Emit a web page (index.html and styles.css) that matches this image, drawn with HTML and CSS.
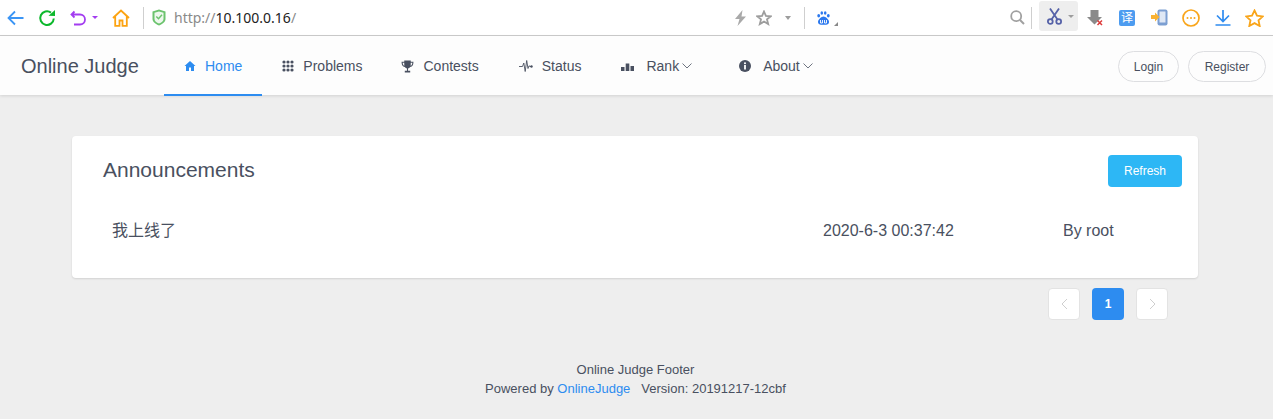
FILE: index.html
```html
<!DOCTYPE html>
<html lang="en">
<head>
<meta charset="utf-8">
<title>Online Judge</title>
<link rel="stylesheet" href="styles.css">
</head>
<body>
<div class="toolbar">
  <svg class="ti ti-back" viewBox="0 0 17 16"><path d="M8 1.500 1.500 8 8 14.500M1.500 8H16.500" fill="none" stroke="#3b95f5" stroke-width="1.800"/></svg>
  <svg class="ti ti-reload" viewBox="0 0 18 18"><path d="M15.800 9.500A6.800 6.800 0 1 1 13 3.600" fill="none" stroke="#0cb82c" stroke-width="2"/><path d="M10.500 6.700 17 7V1z" fill="#0cb82c"/></svg>
  <svg class="ti ti-undo" viewBox="0 0 16 16"><path d="M4.500 1.500 1.500 4.500 4.500 7.500M1.500 4.500H10a4.500 4.500 0 0 1 0 10H4" fill="none" stroke="#a33df0" stroke-width="1.800"/></svg>
  <span class="caret caret-purple"></span>
  <svg class="ti ti-home" viewBox="0 0 18 18"><path d="M1 9 9 1.500 17 9M3.200 7.500V16.800H7.500V11.500H10.500V16.800H14.800V7.500" fill="none" stroke="#fca311" stroke-width="1.800"/></svg>
  <span class="sep sep-left"></span>
  <svg class="ti ti-shield" viewBox="0 0 14 17"><path d="M.5 2.500 7 .5l6.500 2V10c0 3-3 5-6.500 6.500C3.500 15 .5 13 .5 10z" fill="#6cc36e"/><path d="M2.500 3.800 7 2.500l4.500 1.300V10c0 2-2 3.500-4.500 4.500C4.500 13.500 2.500 12 2.500 10z" fill="#eef8ee"/><path d="M4.300 7.500 6.500 9.700 10 5.800" fill="none" stroke="#6cc36e" stroke-width="1.500"/></svg>
  <span class="url"><span class="url-dim">http://</span>10.100.0.16<span class="url-dim">/</span></span>
  <svg class="ti ti-bolt" viewBox="0 0 13 16"><path d="M8.500 0 1 9H5.500L3.500 16 12 6.500H7.500z" fill="#a9a9a9"/></svg>
  <svg class="ti ti-star" viewBox="0 0 16 16"><path d="M8 1.500 9.900 5.900 14.700 6.300 11 9.400 12.200 14.100 8 11.600 3.800 14.100 5 9.400 1.300 6.300 6.100 5.900z" fill="none" stroke="#9d9d9d" stroke-width="1.800"/></svg>
  <span class="caret caret-gray"></span>
  <span class="sep sep-mid"></span>
  <svg class="ti ti-paw" viewBox="0 0 13 14"><g fill="#2b78ee"><ellipse cx="1.700" cy="4.700" rx="1.400" ry="1.700"/><ellipse cx="4.800" cy="2" rx="1.300" ry="1.700"/><ellipse cx="8.200" cy="2" rx="1.300" ry="1.700"/><ellipse cx="11.300" cy="4.700" rx="1.400" ry="1.700"/><path d="M6.500 5.500C4.500 5.500 1 8.500 1 11c0 2 1.500 2.700 3 2.700h5c1.500 0 3-.7 3-2.700 0-2.500-3.500-5.500-5.500-5.500z"/></g><path d="M3.500 9v3h2V9M7.500 9v3h2V9" fill="none" stroke="#fff" stroke-width=".9"/></svg>
  <span class="corner"></span>
  <span class="toolbar-spacer"></span>
  <svg class="ti ti-search" viewBox="0 0 15 15"><circle cx="6.200" cy="6.200" r="5" fill="none" stroke="#a0a0a0" stroke-width="1.800"/><path d="M10 10 14 14" stroke="#a0a0a0" stroke-width="2"/></svg>
  <span class="sep sep-right"></span>
  <span class="cut-box">
    <svg class="ti ti-cut" viewBox="0 0 15 17"><g fill="none" stroke="#5662a8" stroke-width="1.800"><circle cx="3.300" cy="13.500" r="2.400"/><circle cx="11.700" cy="13.500" r="2.400"/><path d="M4.500 11.500 12 .5M10.500 11.500 3 .5"/></g></svg>
    <span class="caret caret-gray caret-cut"></span>
  </span>
  <svg class="ti ti-dl" viewBox="0 0 16 16"><path d="M3.500 0h8v7H15l-7.500 7.500L0 7h3.500z" fill="#8a8a8a"/><path d="M10.500 10.500 15 15M15 10.500 10.500 15" stroke="#dd3a3a" stroke-width="1.500"/></svg>
  <span class="ti-trans">译</span>
  <svg class="ti ti-phone" viewBox="0 0 17 17"><rect x="6.500" y=".5" width="10" height="16" rx="2" fill="#7c9fd2"/><rect x="8.500" y="2.500" width="6" height="11" fill="#dfe8f5"/><path d="M0 6h4V3.500L8.500 8 4 12.500V10H0z" fill="#f9b233"/></svg>
  <svg class="ti ti-more" viewBox="0 0 18 18"><circle cx="9" cy="9" r="8" fill="none" stroke="#f9a51a" stroke-width="1.700"/><g fill="#f9a51a"><circle cx="5.500" cy="9" r="1"/><circle cx="9" cy="9" r="1"/><circle cx="12.500" cy="9" r="1"/></g></svg>
  <svg class="ti ti-down" viewBox="0 0 16 16"><path d="M8 0V11M2 5.500 8 11.500 14 5.500M.5 15H15.500" fill="none" stroke="#2f8cf0" stroke-width="1.700"/></svg>
  <svg class="ti ti-fav" viewBox="0 0 19 18"><path d="M9.500 1.500 12 6.700 17.800 7.400 13.500 11.300 14.700 17 9.500 14.100 4.300 17 5.500 11.300 1.200 7.400 7 6.700z" fill="none" stroke="#f9a51a" stroke-width="1.800"/></svg>
</div>

<nav class="navbar">
  <div class="brand">Online Judge</div>
  <ul class="menu">
    <li class="menu-item active"><svg class="ni" viewBox="0 0 12 12"><path d="M6 1 .5 6H2v5h3V7.500h2V11h3V6h1.500z" fill="#2d8cf0"/></svg>Home</li>
    <li class="menu-item problems"><svg class="ni" viewBox="0 0 12 12"><g fill="#495060"><circle cx="2" cy="2" r="1.600"/><circle cx="6" cy="2" r="1.600"/><circle cx="10" cy="2" r="1.600"/><circle cx="2" cy="6" r="1.600"/><circle cx="6" cy="6" r="1.600"/><circle cx="10" cy="6" r="1.600"/><circle cx="2" cy="10" r="1.600"/><circle cx="6" cy="10" r="1.600"/><circle cx="10" cy="10" r="1.600"/></g></svg>Problems</li>
    <li class="menu-item"><svg class="ni ni-trophy" viewBox="0 0 12 12"><path d="M3 .5h6v1h2.500C11.500 4.500 10.500 6 8.500 6.500 8 7.300 7 7.700 6.500 7.800V10H8.500v1.500h-5V10h2V7.800C5 7.700 4 7.300 3.500 6.500 1.500 6 .5 4.500.5 1.500H3zM1.500 2.500C1.700 4 2.200 5 3.100 5.400 3 4.500 3 3.500 3 2.500zM10.500 2.500H9c0 1 0 2-.1 2.900C9.800 5 10.300 4 10.500 2.500z" fill="#495060" fill-rule="evenodd"/></svg>Contests</li>
    <li class="menu-item"><svg class="ni ni-pulse" viewBox="0 0 14 14"><path d="M0 7.500H3.500L4.800 4 6.200 12.500 7.700 1.500 9 9.500 10 6.800 11 7.500H13" fill="none" stroke="#495060" stroke-width=".9"/><circle cx="12.500" cy="7.500" r="1.200" fill="#495060"/></svg>Status</li>
    <li class="menu-item"><svg class="ni ni-rank" viewBox="0 0 13 12"><path d="M0 7h3.500v4H0zM4.700 3.500h3.600V11H4.700zM9.500 6H13v5H9.500z" fill="#495060"/></svg>Rank<svg class="chev" viewBox="0 0 10 6"><path d="M.5.500 5 5 9.500.5" fill="none" stroke="#495060" stroke-width=".8"/></svg></li>
    <li class="menu-item about"><svg class="ni ni-info" viewBox="0 0 12 12"><circle cx="6" cy="6" r="6" fill="#495060"/><rect x="5.100" y="5" width="1.800" height="4.500" fill="#fff"/><circle cx="6" cy="3.300" r="1.050" fill="#fff"/></svg>About<svg class="chev" viewBox="0 0 10 6"><path d="M.5.500 5 5 9.500.5" fill="none" stroke="#495060" stroke-width=".8"/></svg></li>
  </ul>
  <div class="nav-actions">
    <button class="pill pill-login">Login</button>
    <button class="pill pill-register">Register</button>
  </div>
</nav>

<main class="content">
  <section class="card">
    <header class="card-head">
      <h2 class="card-title">Announcements</h2>
      <button class="refresh">Refresh</button>
    </header>
    <div class="row">
      <span class="row-title">我上线了</span>
      <span class="row-date">2020-6-3 00:37:42</span>
      <span class="row-author">By root</span>
    </div>
  </section>
  <div class="pager">
    <span class="page"><svg class="page-arrow" viewBox="0 0 7 12"><path d="M6 1 1 6l5 5" fill="none" stroke="#cfcfcf" stroke-width="1"/></svg></span>
    <span class="page current">1</span>
    <span class="page"><svg class="page-arrow" viewBox="0 0 7 12"><path d="M1 1l5 5-5 5" fill="none" stroke="#cfcfcf" stroke-width="1"/></svg></span>
  </div>
</main>

<footer class="footer">
  <p class="footer-line">Online Judge Footer</p>
  <p class="footer-line">Powered by <a class="footer-link">OnlineJudge</a><span class="footer-version">Version: 20191217-12cbf</span></p>
</footer>
</body>
</html>
```
FILE: styles.css
```css
* { box-sizing: border-box; }
html, body { margin: 0; padding: 0; }
body {
  height: 419px;
  overflow: hidden;
  background: #eeeeee;
  color: #495060;
  font-family: "Liberation Sans", "Noto Sans CJK SC", sans-serif;
  font-size: 14px;
}

/* browser toolbar */
.toolbar {
  display: flex;
  align-items: center;
  height: 36px;
  padding-left: 7px;
  background: #fff;
  border-bottom: 1px solid #cccccc;
}
.ti { display: block; flex: none; }
.ti-back { width: 17px; height: 16px; }
.ti-reload { width: 18px; height: 18px; margin-left: 14px; }
.ti-undo { width: 16px; height: 16px; margin-left: 14px; }
.ti-home { width: 18px; height: 18px; margin-left: 14px; }
.caret { flex: none; width: 0; height: 0; border-left: 3.500px solid transparent; border-right: 3.500px solid transparent; border-top: 4px solid #9d9d9d; }
.caret-purple { margin-left: 6px; border-top-color: #a33df0; border-left-width: 3px; border-right-width: 3px; border-top-width: 3px; }
.sep { flex: none; width: 1px; height: 22px; background: #cfcfcf; }
.sep-left { margin-left: 13px; }
.ti-shield { width: 14px; height: 17px; margin-left: 8px; }
.url { flex: none; width: 560px; margin-left: 8px; font-family: "Noto Sans", sans-serif; font-size: 14px; color: #222; white-space: nowrap; }
.url-dim { color: #8a8a8a; }
.toolbar-spacer { flex: 1; }
.ti-bolt { width: 13px; height: 16px; }
.ti-star { width: 16px; height: 16px; margin-left: 9px; }
.caret-gray { margin-left: 13px; }
.sep-mid { margin-left: 13px; }
.ti-paw { width: 13px; height: 14px; margin-left: 12px; }
.corner { flex: none; width: 0; height: 0; margin: 12px 0 0 4px; border-left: 4px solid transparent; border-bottom: 4px solid #888; }
.ti-search { width: 15px; height: 15px; }
.sep-right { margin-left: 6px; }
.cut-box { display: flex; align-items: center; flex: none; width: 39px; height: 30px; margin-left: 7px; margin-top: 1px; padding-left: 8px; border-radius: 3px; background: #eeeeee; align-self: flex-start; }
.ti-cut { width: 15px; height: 17px; }
.caret-cut { margin-left: 6px; border-left-width: 3px; border-right-width: 3px; border-top-width: 3px; }
.ti-dl { width: 16px; height: 16px; margin-left: 9px; }
.ti-trans { display: flex; align-items: center; justify-content: center; flex: none; width: 16px; height: 16px; margin-left: 16px; border-radius: 2px; background: #4d9cf0; color: #fff; font-size: 12px; line-height: 16px; }
.ti-phone { width: 17px; height: 17px; margin-left: 16px; }
.ti-more { width: 18px; height: 18px; margin-left: 14px; }
.ti-down { width: 16px; height: 16px; margin-left: 15px; }
.ti-fav { width: 19px; height: 18px; margin-left: 14px; margin-right: 9px; }

/* site nav */
.navbar {
  display: flex;
  align-items: flex-start;
  height: 59px;
  padding-left: 21px;
  background: #fdfdfd;
  box-shadow: 0 1px 3px rgba(0, 0, 0, .12);
  position: relative;
}
.brand { width: 143px; font-size: 20px; line-height: 60px; }
.menu { display: flex; height: 60px; margin: 0; padding: 0; list-style: none; }
.menu-item { display: flex; align-items: center; padding: 0 20px; height: 60px; white-space: nowrap; }
.menu-item.active { color: #2d8cf0; box-shadow: inset 0 -2px 0 #2d8cf0; }
.menu-item.problems { padding-right: 18px; }
.menu-item.about { margin-left: 7px; }
.ni { flex: none; width: 12px; height: 12px; margin-right: 9px; }
.ni-trophy { width: 13px; height: 13px; margin-right: 10px; }
.ni-pulse { width: 14px; height: 14px; margin-right: 9px; }
.ni-rank { width: 13px; margin-right: 12px; }
.ni-info { margin-right: 12px; }
.chev { flex: none; width: 10px; height: 6px; margin-left: 3px; margin-top: -1px; }
.nav-actions { display: flex; gap: 9px; margin-left: auto; padding: 15px 7px 0 0; }
.pill {
  height: 31px;
  padding: 0;
  border: 1px solid #dddee1;
  border-radius: 16px;
  background: #fdfdfd;
  color: #495060;
  font: 12px "Liberation Sans", sans-serif;
}
.pill-login { width: 61px; }
.pill-register { width: 78px; }

/* content */
.content { padding: 41px 75px 0 72px; }
.card {
  height: 142px;
  padding: 19px 16px 0 31px;
  border-radius: 4px;
  background: #fff;
  box-shadow: 0 1px 2px rgba(0, 0, 0, .12);
}
.card-head { display: flex; justify-content: space-between; align-items: flex-start; height: 32px; }
.card-title { margin: 0; font-size: 21px; font-weight: 400; line-height: 30px; }
.refresh {
  width: 74px;
  height: 32px;
  padding: 0;
  border: 0;
  border-radius: 4px;
  background: #2db7f5;
  color: #fff;
  font: 12px "Liberation Sans", sans-serif;
}
.row { display: flex; margin-top: 33px; padding-left: 9px; font-size: 16px; line-height: 22px; }
.row-title { width: 711px; }
.row-date { width: 240px; }

.pager { display: flex; justify-content: flex-end; gap: 12px; margin-top: 10px; padding-right: 30px; }
.page {
  display: flex;
  align-items: center;
  justify-content: center;
  width: 32px;
  height: 32px;
  border: 1px solid #e3e3e3;
  border-radius: 4px;
  background: #fff;
  font-size: 12px;
}
.page-arrow { width: 7px; height: 12px; }
.page.current { border: 0; background: #2d8cf0; color: #fff; font-weight: 700; }

/* footer */
.footer { margin-top: 40px; padding-right: 2px; text-align: center; font-size: 13px; }
.footer-line { margin: 0; line-height: 19px; }
.footer-link { color: #2d8cf0; }
.footer-version { margin-left: 11px; }
```
